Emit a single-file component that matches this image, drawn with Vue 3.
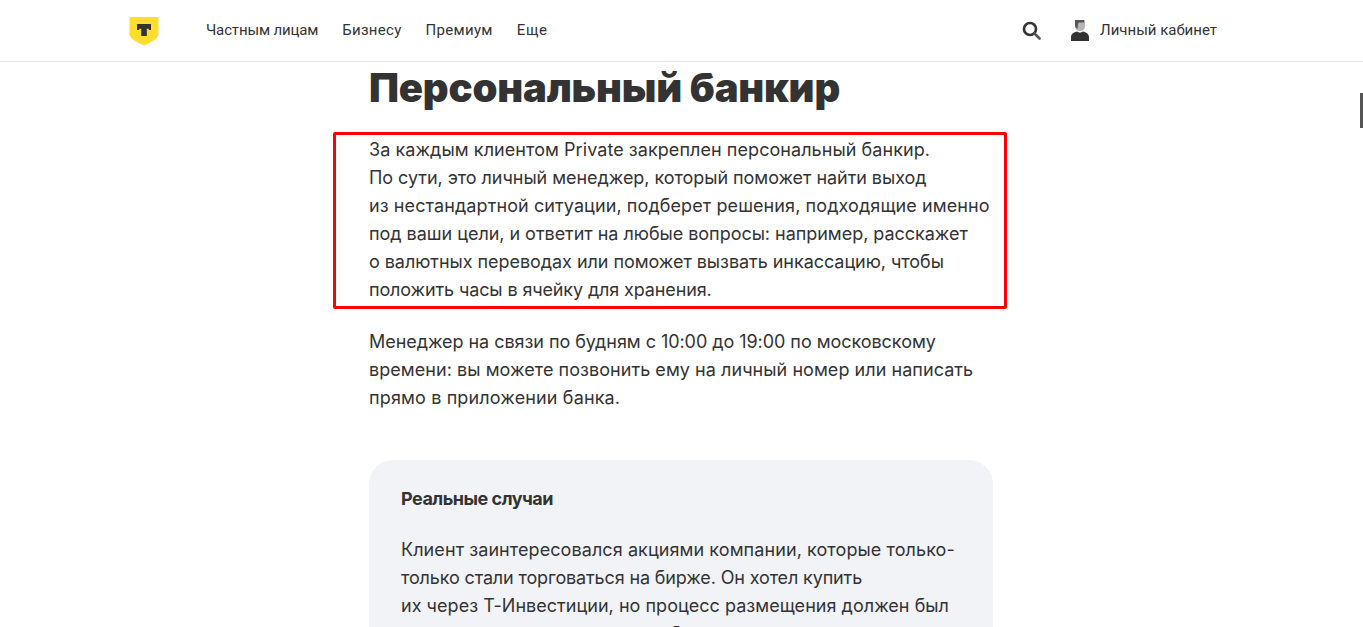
<script setup>
const navItems = [
  { text: 'Частным лицам', spacing: -0.15 },
  { text: 'Бизнесу', spacing: 0.3 },
  { text: 'Премиум', spacing: 0.3 },
  { text: 'Еще', spacing: 0.6 }
]
const bankerLines = [
  { text: 'За каждым клиентом Private закреплен персональный банкир.', spacing: 0.06 },
  { text: 'По сути, это личный менеджер, который поможет найти выход', spacing: -0.05 },
  { text: 'из нестандартной ситуации, подберет решения, подходящие именно', spacing: 0.09 },
  { text: 'под ваши цели, и ответит на любые вопросы: например, расскажет', spacing: -0.035 },
  { text: 'о валютных переводах или поможет вызвать инкассацию, чтобы', spacing: -0.05 },
  { text: 'положить часы в ячейку для хранения.', spacing: -0.13 }
]
const contactLines = [
  { text: 'Менеджер на связи по будням с 10:00 до 19:00 по московскому', spacing: -0.05 },
  { text: 'времени: вы можете позвонить ему на личный номер или написать', spacing: 0.05 },
  { text: 'прямо в приложении банка.', spacing: 0.14 }
]
const caseLines = [
  { text: 'Клиент заинтересовался акциями компании, которые только-', spacing: 0.08 },
  { text: 'только стали торговаться на бирже. Он хотел купить', spacing: -0.14 },
  { text: 'их через Т-Инвестиции, но процесс размещения должен был', spacing: 0.03 },
  { text: 'занять еще пару недель, а он бы уехал', spacing: 0.1 }
]
</script>

<template>
  <div class="page">
    <header class="header">
      <div class="header-left">
        <svg class="logo" width="30" height="30" viewBox="0 0 30 30" aria-hidden="true">
          <path d="M0.500 1 H29.500 V18 C29.500 22 25 25 15 29.500 C5 25 0.500 22 0.500 18 Z" fill="#ffdd2d" />
          <path d="M8 8 H22 V14 H19.800 V12.800 H17.800 V20 H12.200 V12.800 H10.200 V14 H8 Z" fill="#333" />
        </svg>
        <nav class="nav">
          <a
            v-for="item in navItems"
            :key="item.text"
            class="nav-link"
            :style="{ letterSpacing: item.spacing + 'px' }"
          >{{ item.text }}</a>
        </nav>
      </div>
      <div class="header-right">
        <svg class="search" width="19" height="19" viewBox="0 0 19 19" aria-hidden="true">
          <circle cx="8" cy="8" r="6" fill="none" stroke="#333" stroke-width="2.600" />
          <path d="M12.500 12.500 L17.500 17.500" stroke="#555" stroke-width="2.600" stroke-linecap="round" />
        </svg>
        <a class="account">
          <svg width="18" height="21" viewBox="0 0 18 21" aria-hidden="true">
            <path d="M4 0 H14 V6 C14 9 12 11 9 11 C6 11 4 9 4 6 Z" fill="#b5b5b5" />
            <path d="M4 0 H13 V2.500 H8 C7 2.500 7 5 6.500 8.500 L5 8 C4.300 7 4 6 4 5 Z" fill="#555" />
            <path d="M0 21 V17 C0 14 3 12 6 11.500 C8 13 10 13 12 11.500 C15 12 18 14 18 17 V21 Z" fill="#333" />
          </svg>
          <span>Личный кабинет</span>
        </a>
      </div>
    </header>

    <main class="content">
      <h1 class="title">Персональный банкир</h1>
      <div class="highlight">
        <p class="text">
          <span
            v-for="line in bankerLines"
            :key="line.text"
            class="line"
            :style="{ letterSpacing: line.spacing + 'px' }"
          >{{ line.text }}</span>
        </p>
      </div>
      <p class="text contact">
        <span
          v-for="line in contactLines"
          :key="line.text"
          class="line"
          :style="{ letterSpacing: line.spacing + 'px' }"
        >{{ line.text }}</span>
      </p>
      <section class="card">
        <h2 class="card-title">Реальные случаи</h2>
        <p class="text">
          <span
            v-for="line in caseLines"
            :key="line.text"
            class="line"
            :style="{ letterSpacing: line.spacing + 'px' }"
          >{{ line.text }}</span>
        </p>
      </section>
    </main>
    <div class="scroll-thumb"></div>
  </div>
</template>

<style>
html, body { margin: 0; height: 627px; overflow: hidden; background: #fff; }
</style>

<style scoped>
.page {
  position: relative;
  height: 627px;
  overflow: hidden;
  color: #333;
  font-family: Inter, "Noto Sans", sans-serif;
}
.header {
  box-sizing: content-box;
  height: 61px;
  border-bottom: 1px solid #e3e3e3;
  padding: 0 146px 0 129px;
  display: flex;
  align-items: center;
  justify-content: space-between;
  font-family: Roboto, sans-serif;
  font-size: 15px;
}
.header-left, .header-right, .nav, .account { display: flex; align-items: center; }
.logo { margin-right: 47px; }
.nav { gap: 24px; margin-bottom: 2px; }
.nav-link { color: #333; }
.header-right { gap: 30px; }
.account { gap: 11px; color: #333; }
.account span { margin-bottom: 2px; }
.content {
  width: 624px;
  margin-left: 369px;
}
.title {
  margin: 0;
  padding-top: 2px;
  padding-bottom: 1px;
  font-size: 40px;
  line-height: 48px;
  font-weight: 900;
  letter-spacing: -0.2px;
}
.text {
  margin: 0;
  font-size: 18px;
  line-height: 28px;
}
.line { display: block; white-space: nowrap; }
.highlight {
  margin: 19px -14px 0 -36px;
  padding: 1px 0 2px 33px;
  border: 3px solid #f00;
  border-radius: 2px;
}
.contact { margin-top: 19px; }
.card {
  margin-top: 48px;
  padding: 25px 32px;
  background: #f2f3f7;
  border-radius: 24px;
}
.card-title {
  margin: 0 0 23px;
  font-size: 18px;
  line-height: 28px;
  font-weight: 700;
  letter-spacing: -0.5px;
}
.scroll-thumb {
  position: absolute;
  right: 0;
  top: 93px;
  width: 3px;
  height: 35px;
  background: #555;
}
</style>
